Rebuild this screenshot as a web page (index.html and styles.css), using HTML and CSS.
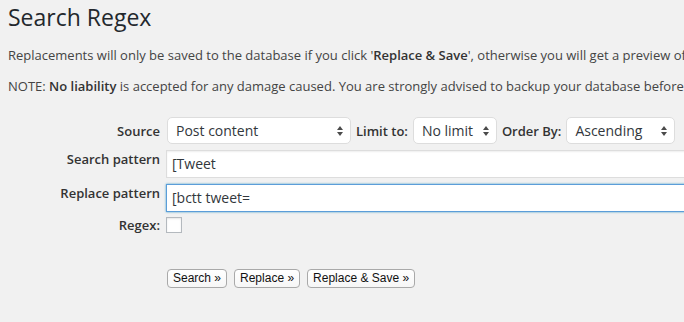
FILE: index.html
```html
<!DOCTYPE html>
<html>
<head>
<meta charset="utf-8">
<link rel="stylesheet" href="styles.css">
</head>
<body>
<div class="wrap">
  <h1 class="title">Search Regex</h1>
  <p class="note">Replacements will only be saved to the database if you click '<strong>Replace &amp; Save</strong>', otherwise you will get a preview of the results.</p>
  <p class="note">NOTE: <strong>No liability</strong> is accepted for any damage caused. You are strongly advised to backup your database before making any changes.</p>

  <form class="form">
    <div class="row row-source">
      <div class="label">Source</div>
      <div class="controls">
        <div class="select sel-source"><span>Post content</span><svg class="arrows" width="6" height="10" viewBox="0 0 6 10"><path d="M3 0 L6 4 L0 4 Z M0 6 L6 6 L3 10 Z" fill="#4a4a4a"/></svg></div>
        <span class="inline-label">Limit to:</span>
        <div class="select sel-limit"><span>No limit</span><svg class="arrows" width="6" height="10" viewBox="0 0 6 10"><path d="M3 0 L6 4 L0 4 Z M0 6 L6 6 L3 10 Z" fill="#4a4a4a"/></svg></div>
        <span class="inline-label">Order By:</span>
        <div class="select sel-order"><span>Ascending</span><svg class="arrows" width="6" height="10" viewBox="0 0 6 10"><path d="M3 0 L6 4 L0 4 Z M0 6 L6 6 L3 10 Z" fill="#4a4a4a"/></svg></div>
      </div>
    </div>
    <div class="row row-pattern">
      <div class="label">Search pattern</div>
      <div class="controls"><div class="text-input">[Tweet</div></div>
    </div>
    <div class="row row-pattern">
      <div class="label">Replace pattern</div>
      <div class="controls"><div class="text-input focused">[bctt tweet=</div></div>
    </div>
    <div class="row row-regex">
      <div class="label">Regex:</div>
      <div class="controls"><span class="checkbox"></span></div>
    </div>
    <div class="buttons">
      <span class="button">Search »</span>
      <span class="button">Replace »</span>
      <span class="button">Replace &amp; Save »</span>
    </div>
  </form>
</div>
</body>
</html>
```

FILE: styles.css
```css
html, body {
  margin: 0;
  padding: 0;
  background: #f1f1f1;
  overflow: hidden;
}
body {
  font-family: "Open Sans", sans-serif;
  color: #444;
  font-size: 13px;
  width: 684px;
  height: 322px;
}
.wrap {
  padding: 0 0 0 8px;
  width: 1000px;
}
.title {
  font-size: 23px;
  font-weight: 400;
  color: #23282d;
  margin: 0;
  padding: 2px 0 0 0;
  line-height: 30px;
}
.note {
  margin: 16px 0 0 0;
  line-height: 15px;
  white-space: nowrap;
}
.note strong {
  font-weight: 600;
  color: #333;
}
.form {
  margin-top: 23px;
}
.row {
  display: grid;
  grid-template-columns: 152px auto;
  column-gap: 6px;
  align-items: center;
}
.row + .row {
  margin-top: 6px;
}
.label {
  text-align: right;
  font-weight: 600;
  color: #333;
  font-size: 13px;
}
.row-pattern .label {
  align-self: start;
  padding-top: 0px;
}
.controls {
  display: flex;
  align-items: center;
}
.select {
  box-sizing: border-box;
  height: 27px;
  background: #fff;
  border: 1px solid #ddd;
  border-radius: 5px;
  display: flex;
  align-items: center;
  justify-content: space-between;
  padding: 0 7px 0 8px;
  font-size: 14px;
  color: #32373c;
}
.sel-source { width: 184px; margin-left: 1px; }
.sel-limit { width: 84px; }
.sel-order { width: 109px; }
.inline-label {
  font-weight: 600;
  color: #333;
  margin: 0 5px;
}
.text-input {
  box-sizing: border-box;
  width: 700px;
  height: 28px;
  background: #fff;
  border: 1px solid #ddd;
  box-shadow: inset 0 1px 2px rgba(0,0,0,.07);
  padding: 0 5px;
  font-size: 14px;
  line-height: 26px;
  color: #32373c;
}
.text-input.focused {
  border-color: #5b9dd9;
  box-shadow: 0 0 2px rgba(30,140,190,.8);
}
.row.row-regex {
  margin-top: 4px;
}
.checkbox {
  display: block;
  box-sizing: border-box;
  width: 16px;
  height: 16px;
  background: #fff;
  border: 1px solid #b4b9be;
  box-shadow: inset 0 1px 2px rgba(0,0,0,.1);
}
.buttons {
  display: flex;
  gap: 7px;
  margin: 35px 0 0 159px;
}
.button {
  box-sizing: border-box;
  height: 19px;
  padding: 0 5px;
  border: 1px solid #a9a9a9;
  border-radius: 4px;
  background: linear-gradient(#fff, #f6f6f6);
  font-family: "Liberation Sans", Arial, sans-serif;
  font-size: 12px;
  line-height: 17px;
  color: #111;
}
```
